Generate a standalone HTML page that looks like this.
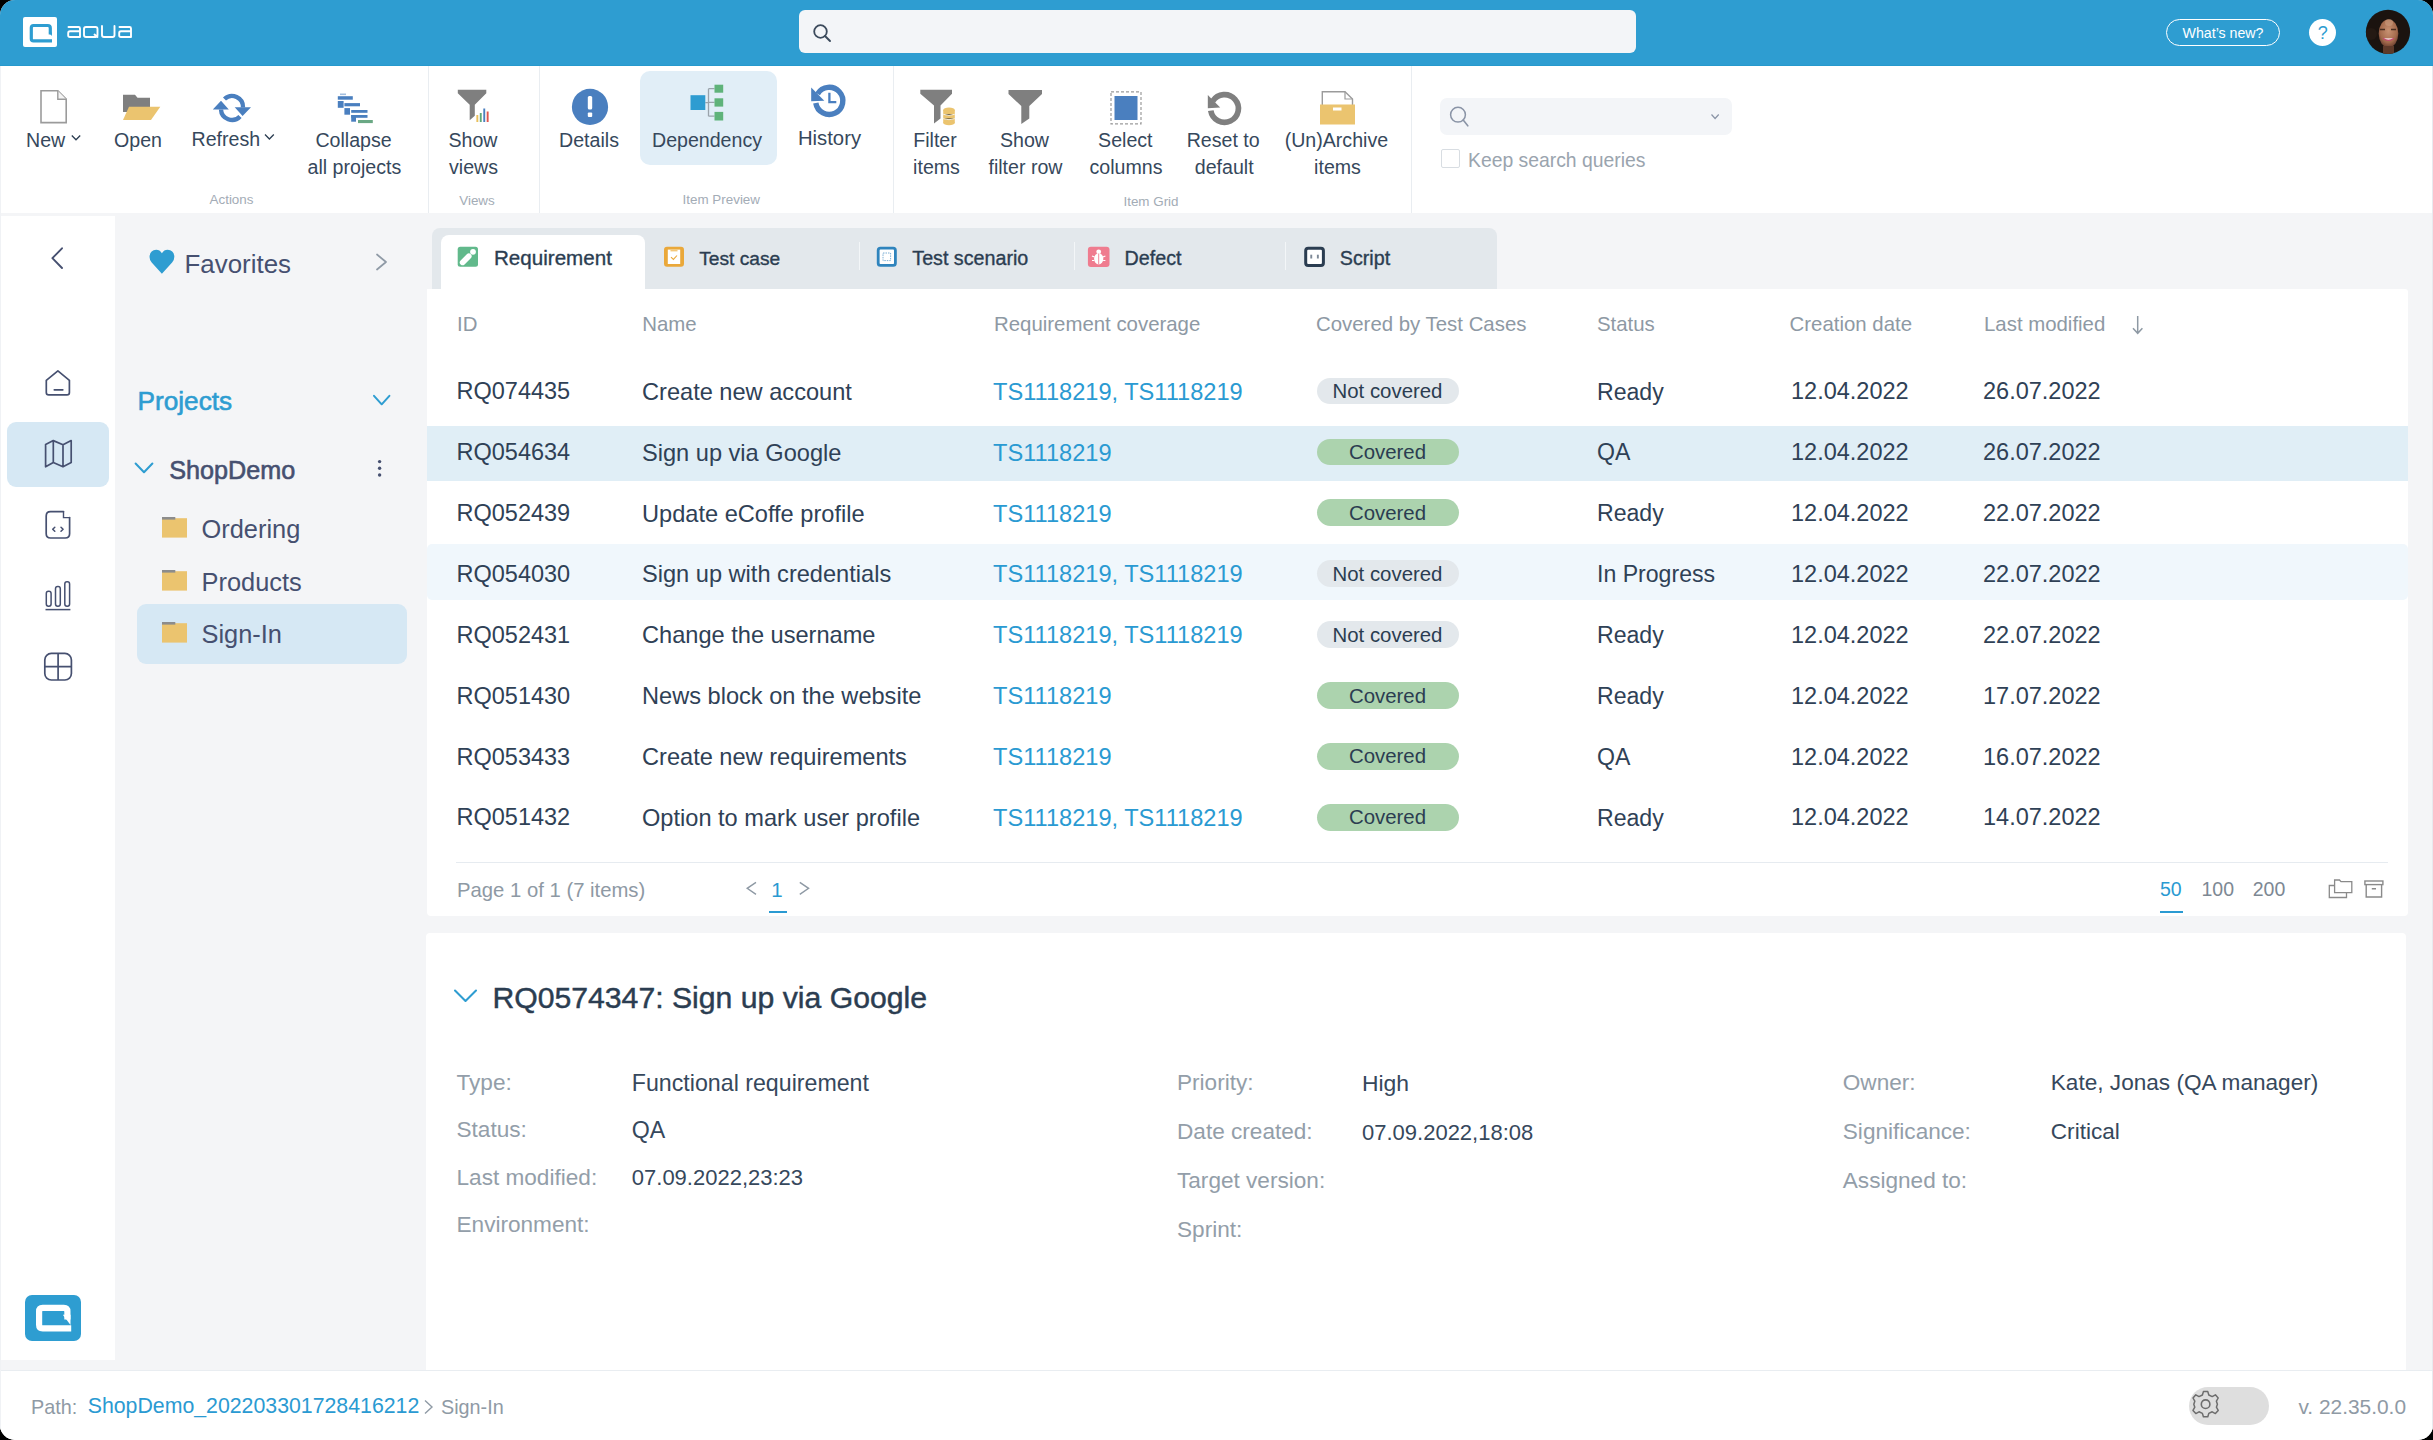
<!DOCTYPE html>
<html><head><meta charset="utf-8">
<style>
*{box-sizing:border-box;margin:0;padding:0}
html,body{width:2433px;height:1440px;overflow:hidden;background:#000}
body{font-family:"Liberation Sans",sans-serif;color:#2b3d51}
#app{position:absolute;left:0;top:0;width:2433px;height:1440px;border-radius:15px;overflow:hidden;background:#f4f5f7}
.a{position:absolute;white-space:nowrap}
svg.a{display:block}
</style></head><body>
<div id="app">
<div class="a" style="left:0px;top:0px;width:2433px;height:66px;background:#2e9dd1;"></div><div class="a" style="left:0px;top:64.6px;width:2433px;height:1.4px;background:#2699cd;"></div><div class="a" style="left:23px;top:17px;width:34px;height:30px;background:#fff;border-radius:2px"></div><svg class="a" style="left:23px;top:17px;overflow:visible" width="34" height="30" viewBox="23 17 34 30"><path d="M50.3 34.5 V28 Q50.3 25.5 47.8 25.5 H33.5 Q31.3 25.5 31.3 27.7 V38.7 Q31.3 40.9 33.5 40.9 H52" fill="none" stroke="#2e9dd1" stroke-width="3.2"/><path d="M48.7 32.5 L51.9 32.5 L51.9 36 Z" fill="#2e9dd1"/></svg><svg class="a" style="left:66px;top:24px;overflow:visible" width="68" height="16" viewBox="66 24 68 16"><g fill="none" stroke="#fff" stroke-width="1.9" stroke-linecap="round" stroke-linejoin="round">
<path d="M68.5 27 H78.5 Q80 27 80 28.5 V37 M80 31.3 H70 Q68.2 31.3 68.2 33 V35.5 Q68.2 37 70 37 H80"/>
<path d="M86 27 H95.5 Q97.5 27 97.5 29 V35 Q97.5 37 95.5 37 H86 Q84 37 84 35 V29 Q84 27 86 27 Z M94.5 34.5 L97.5 37"/>
<path d="M102 26 V35 Q102 37 104 37 H112.5 Q114.5 37 114.5 35 V26"/>
<path d="M119.5 27 H129.5 Q131 27 131 28.5 V37 M131 31.3 H121 Q119.2 31.3 119.2 33 V35.5 Q119.2 37 121 37 H131"/>
</g></svg><div class="a" style="left:799px;top:10px;width:837px;height:43px;background:#f3f5f8;border-radius:6px"></div><svg class="a" style="left:811px;top:22px;overflow:visible" width="22" height="22" viewBox="811 22 22 22"><circle cx="820.5" cy="31.5" r="6.3" fill="none" stroke="#3b4a5c" stroke-width="1.8"/><path d="M825 36 L830 41" stroke="#3b4a5c" stroke-width="1.9" stroke-linecap="round"/></svg><div class="a" style="left:2166px;top:19px;width:114px;height:27px;border:1.6px solid #fff;border-radius:14px"></div><div class="a" style="left:2166.00px;top:24.38px;width:114px;text-align:center;font-size:14.2px;line-height:18px;color:#fff;">What’s new?</div><div class="a" style="left:2309px;top:18.5px;width:27px;height:27px;background:#fff;border-radius:50%"></div><div class="a" style="left:2309.20px;top:22.26px;width:27px;text-align:center;font-size:18px;line-height:22px;color:#2e9dd1;">?</div><svg class="a" style="left:2364px;top:8px;overflow:visible" width="48" height="48" viewBox="2364 8 48 48"><defs><clipPath id="avc"><circle cx="2388" cy="31.9" r="22.1"/></clipPath><radialGradient id="fg" cx="0.5" cy="0.4" r="0.6"><stop offset="0" stop-color="#c89272"/><stop offset="0.7" stop-color="#a46a4c"/><stop offset="1" stop-color="#6b4030"/></radialGradient></defs><g clip-path="url(#avc)"><rect x="2364" y="8" width="48" height="48" fill="#1b130f"/><circle cx="2371" cy="34" r="6" fill="#241913"/><ellipse cx="2388.5" cy="33.5" rx="9.8" ry="14" fill="url(#fg)"/><rect x="2383" y="46" width="11" height="8" fill="#5e3a2a"/><path d="M2380 29.5 H2385 M2391 29.5 H2396" stroke="#4a2e20" stroke-width="1.3"/><path d="M2383 38.3 Q2388.5 42.5 2394 38.3" fill="#f2dede" stroke="#c04a6e" stroke-width="1.3"/><ellipse cx="2389" cy="22.5" rx="4" ry="3.5" fill="#cfa283" opacity=".5"/></g></svg><div class="a" style="left:0px;top:66px;width:2433px;height:147px;background:#fff;"></div><div class="a" style="left:428px;top:66px;width:1px;height:147px;background:#e9edf1;"></div><div class="a" style="left:539px;top:66px;width:1px;height:147px;background:#e9edf1;"></div><div class="a" style="left:893px;top:66px;width:1px;height:147px;background:#e9edf1;"></div><div class="a" style="left:1411px;top:66px;width:1px;height:147px;background:#e9edf1;"></div><div class="a" style="left:640px;top:71px;width:137px;height:94px;background:#e1eef7;border-radius:10px"></div><svg class="a" style="left:38px;top:88px;overflow:visible" width="32" height="38" viewBox="38 88 32 38"><path d="M41 90.8 H57.8 L66.2 99.2 V122.6 H41 Z" fill="#fff" stroke="#9b9b9b" stroke-width="1.6"/><path d="M57.8 90.8 V99.2 H66.2" fill="#f4f4f4" stroke="#9b9b9b" stroke-width="1.4"/></svg><div class="a" style="left:26px;top:127.71px;font-size:19.6px;line-height:24px;color:#36485c;">New</div><svg class="a" style="left:70px;top:133px;overflow:visible" width="14" height="10" viewBox="70 133 14 10"><path d="M71.8 135.5 L76 139.8 L80.2 135.5" fill="none" stroke="#2b3d51" stroke-width="1.3"/></svg><svg class="a" style="left:120px;top:92px;overflow:visible" width="44" height="32" viewBox="120 92 44 32"><path d="M123 94.8 H135 L137.5 97.8 H150 V112 H123 Z" fill="#7f7f7f"/><path d="M123 119.9 L129 106.8 H160.3 L151 119.9 Z" fill="#ebc46f"/></svg><div class="a" style="left:98.00px;top:127.71px;width:80px;text-align:center;font-size:19.6px;line-height:24px;color:#36485c;">Open</div><svg class="a" style="left:210px;top:90px;overflow:visible" width="44" height="36" viewBox="210 90 44 36"><g fill="none" stroke="#4a7fbf" stroke-width="4.4"><path d="M224.5 99 A11 11 0 0 1 243 107.5"/><path d="M240 116.5 A11 11 0 0 1 221 109.5"/></g><path d="M234.7 107.2 L251 107.2 L242.6 116 Z M212.8 109.6 L228.8 109.6 L221 100.8 Z" fill="#4a7fbf"/></svg><div class="a" style="left:191.5px;top:126.51px;font-size:19.6px;line-height:24px;color:#36485c;">Refresh</div><svg class="a" style="left:262px;top:132px;overflow:visible" width="14" height="10" viewBox="262 132 14 10"><path d="M265 134.5 L269.4 139 L273.8 134.5" fill="none" stroke="#2b3d51" stroke-width="1.3"/></svg><svg class="a" style="left:335px;top:90px;overflow:visible" width="42" height="36" viewBox="335 90 42 36"><g fill="#4a7fbf"><rect x="337.8" y="96.2" width="15" height="3.5"/><rect x="340" y="93.5" width="6" height="1.6" opacity=".5"/><rect x="337.8" y="101" width="5.8" height="6.8"/><rect x="344.4" y="103.1" width="15.6" height="3.2"/><rect x="344.4" y="108.1" width="5.6" height="6.6"/><rect x="351.2" y="110" width="16.3" height="2.8"/><rect x="351.2" y="115" width="16.3" height="2.8"/><rect x="351.2" y="115" width="4.8" height="6.7"/></g><rect x="358" y="120" width="14.8" height="3.1" fill="#6aa884"/></svg><div class="a" style="left:273.50px;top:128.21px;width:160px;text-align:center;font-size:19.6px;line-height:24px;color:#36485c;">Collapse</div><div class="a" style="left:274.40px;top:155.21px;width:160px;text-align:center;font-size:19.6px;line-height:24px;color:#36485c;">all projects</div><div class="a" style="left:151.50px;top:191.16px;width:160px;text-align:center;font-size:13.4px;line-height:17px;color:#a3acb6;">Actions</div><svg class="a" style="left:455px;top:88px;overflow:visible" width="36" height="36" viewBox="455 88 36 36"><path d="M457.8 89.8 H486.3 V93.2 L474.8 104.8 V115.8 L469.7 120.2 V104.8 L457.8 93.2 Z" fill="#7f7f7f"/><rect x="476.4" y="115" width="1.9" height="7" fill="#e9bf5c"/><rect x="479.8" y="113" width="1.9" height="9" fill="#5fa87a"/><rect x="483.3" y="108.5" width="1.9" height="13.5" fill="#4a7fbf"/><rect x="486.7" y="111.5" width="1.9" height="10.5" fill="#e0564e"/></svg><div class="a" style="left:393.00px;top:128.21px;width:160px;text-align:center;font-size:19.6px;line-height:24px;color:#36485c;">Show</div><div class="a" style="left:393.50px;top:155.21px;width:160px;text-align:center;font-size:19.6px;line-height:24px;color:#36485c;">views</div><div class="a" style="left:397.00px;top:192.46px;width:160px;text-align:center;font-size:13.4px;line-height:17px;color:#a3acb6;">Views</div><svg class="a" style="left:570px;top:87px;overflow:visible" width="40" height="40" viewBox="570 87 40 40"><circle cx="590" cy="106.9" r="18.1" fill="#4a7fbf"/><rect x="587.8" y="96" width="4.4" height="13.5" rx="1.5" fill="#fff"/><rect x="587.8" y="112.5" width="4.4" height="4.4" rx="1" fill="#fff"/></svg><div class="a" style="left:509.00px;top:128.21px;width:160px;text-align:center;font-size:19.6px;line-height:24px;color:#36485c;">Details</div><svg class="a" style="left:688px;top:82px;overflow:visible" width="40" height="42" viewBox="688 82 40 42"><g stroke="#9aa3ab" stroke-width="1.3" fill="none"><path d="M705.3 102.6 H708.5 M708.5 88.7 V116.2 M708.5 88.7 H714.5 M708.5 102.4 H714.5 M708.5 116.2 H714.5"/></g><rect x="690.5" y="95.2" width="14.8" height="14.8" fill="#2e9cd1"/><g fill="#5fb37a"><rect x="714.5" y="84.7" width="8.7" height="8"/><rect x="714.5" y="98.3" width="8.7" height="8.3"/><rect x="714.5" y="111.9" width="8.7" height="8.6"/></g></svg><div class="a" style="left:627.00px;top:128.21px;width:160px;text-align:center;font-size:19.6px;line-height:24px;color:#36485c;">Dependency</div><svg class="a" style="left:806px;top:80px;overflow:visible" width="44" height="42" viewBox="806 80 44 42"><path d="M815.8 103 A13.6 13.6 0 1 0 817.6 93.8" fill="none" stroke="#4a7fbf" stroke-width="5.4"/><path d="M811.2 87.6 L811.2 101.2 L824.3 100.8 Z" fill="#4a7fbf"/><path d="M829.4 92.8 V102.2 H836.3" fill="none" stroke="#4a7fbf" stroke-width="2.3"/></svg><div class="a" style="left:749.50px;top:125.77px;width:160px;text-align:center;font-size:20.3px;line-height:25px;color:#36485c;">History</div><div class="a" style="left:641.30px;top:191.16px;width:160px;text-align:center;font-size:13.4px;line-height:17px;color:#a3acb6;">Item Preview</div><svg class="a" style="left:917px;top:87px;overflow:visible" width="42" height="40" viewBox="917 87 42 40"><path d="M920.3 89.7 H952 V93.8 L940.5 105.5 V118.5 L934 123.4 V105.5 L920.3 93.8 Z" fill="#7f7f7f"/><g fill="#ebc46f"><ellipse cx="949" cy="110" rx="5.8" ry="2.4"/><rect x="943.2" y="110" width="11.6" height="13"/><ellipse cx="949" cy="123" rx="5.8" ry="2.2"/></g><g stroke="#fff" stroke-width="1" opacity=".8"><path d="M943.2 114.3 Q949 116.5 954.8 114.3 M943.2 118.6 Q949 120.8 954.8 118.6"/></g></svg><div class="a" style="left:855.00px;top:128.21px;width:160px;text-align:center;font-size:19.6px;line-height:24px;color:#36485c;">Filter</div><div class="a" style="left:856.50px;top:155.21px;width:160px;text-align:center;font-size:19.6px;line-height:24px;color:#36485c;">items</div><svg class="a" style="left:1005px;top:87px;overflow:visible" width="40" height="40" viewBox="1005 87 40 40"><path d="M1008.5 90 H1042 V94 L1029.3 106 V118.5 L1021.3 124 V106 L1008.5 94 Z" fill="#7f7f7f"/></svg><div class="a" style="left:944.50px;top:128.21px;width:160px;text-align:center;font-size:19.6px;line-height:24px;color:#36485c;">Show</div><div class="a" style="left:945.50px;top:155.21px;width:160px;text-align:center;font-size:19.6px;line-height:24px;color:#36485c;">filter row</div><svg class="a" style="left:1108px;top:89px;overflow:visible" width="36" height="38" viewBox="1108 89 36 38"><rect x="1111" y="91.9" width="30" height="32" fill="none" stroke="#9b9b9b" stroke-width="1.2" stroke-dasharray="3 2"/><rect x="1114.5" y="96" width="23" height="24" fill="#4a7fbf"/></svg><div class="a" style="left:1045.30px;top:128.21px;width:160px;text-align:center;font-size:19.6px;line-height:24px;color:#36485c;">Select</div><div class="a" style="left:1046.00px;top:155.21px;width:160px;text-align:center;font-size:19.6px;line-height:24px;color:#36485c;">columns</div><svg class="a" style="left:1204px;top:88px;overflow:visible" width="42" height="40" viewBox="1204 88 42 40"><path d="M1210.8 110.6 A13.9 13.9 0 1 0 1212.8 101" fill="none" stroke="#7f7f7f" stroke-width="5.7"/><path d="M1207.8 95 L1207.8 108.2 L1220.2 107.6 Z" fill="#7f7f7f"/></svg><div class="a" style="left:1143.20px;top:128.21px;width:160px;text-align:center;font-size:19.6px;line-height:24px;color:#36485c;">Reset to</div><div class="a" style="left:1144.20px;top:155.21px;width:160px;text-align:center;font-size:19.6px;line-height:24px;color:#36485c;">default</div><svg class="a" style="left:1318px;top:89px;overflow:visible" width="40" height="38" viewBox="1318 89 40 38"><path d="M1322.3 105 V91.8 H1345 L1352.5 99 V105" fill="#fff" stroke="#9b9b9b" stroke-width="1.4"/><path d="M1345 91.8 V99 H1352.5" fill="none" stroke="#9b9b9b" stroke-width="1.2"/><rect x="1320" y="104.5" width="35" height="20" fill="#ebc46f"/><rect x="1333" y="107.5" width="8.5" height="3" fill="#fff"/></svg><div class="a" style="left:1256.40px;top:128.21px;width:160px;text-align:center;font-size:19.6px;line-height:24px;color:#36485c;">(Un)Archive</div><div class="a" style="left:1257.50px;top:155.21px;width:160px;text-align:center;font-size:19.6px;line-height:24px;color:#36485c;">items</div><div class="a" style="left:1071.00px;top:192.56px;width:160px;text-align:center;font-size:13.4px;line-height:17px;color:#a3acb6;">Item Grid</div><div class="a" style="left:1440px;top:98px;width:292px;height:37px;background:#f3f5f8;border-radius:7px"></div><svg class="a" style="left:1446px;top:103px;overflow:visible" width="26" height="26" viewBox="1446 103 26 26"><circle cx="1458" cy="114.7" r="7.4" fill="none" stroke="#8a94a6" stroke-width="1.5"/><path d="M1463.2 120 L1467.8 125.8" stroke="#8a94a6" stroke-width="1.6" stroke-linecap="round"/></svg><svg class="a" style="left:1708px;top:111px;overflow:visible" width="14" height="12" viewBox="1708 111 14 12"><path d="M1711.5 114.5 L1715.1 118.5 L1718.7 114.5" fill="none" stroke="#8a94a6" stroke-width="1.2"/></svg><div class="a" style="left:1440.5px;top:149.2px;width:19px;height:19px;border:1.2px solid #d8dde2;border-radius:2px;background:#fff"></div><div class="a" style="left:1468px;top:148.30px;font-size:19.35px;line-height:24px;color:#9aa4ae;">Keep search queries</div><div class="a" style="left:0px;top:216px;width:114.8px;height:1144px;background:#fff;"></div><div class="a" style="left:7px;top:422px;width:102px;height:64.5px;background:#d6e8f4;border-radius:9px"></div><svg class="a" style="left:40px;top:240px;overflow:visible" width="30" height="36" viewBox="40 240 30 36"><path d="M62 248.3 L52.4 258.2 L62 268" fill="none" stroke="#465070" stroke-width="1.9" stroke-linecap="round" stroke-linejoin="round"/></svg><svg class="a" style="left:40px;top:365px;overflow:visible" width="36" height="36" viewBox="40 365 36 36"><path d="M46.3 380.3 L57.9 370.8 L69.4 380.3 V392.4 Q69.4 394.8 67 394.8 H48.7 Q46.3 394.8 46.3 392.4 Z" fill="none" stroke="#465070" stroke-width="1.7" stroke-linejoin="round"/><path d="M54.3 389.8 H62.8" stroke="#465070" stroke-width="1.7" stroke-linecap="round"/></svg><svg class="a" style="left:40px;top:435px;overflow:visible" width="36" height="36" viewBox="40 435 36 36"><path d="M45.6 444.5 L53.3 440.6 L63 444.8 L71.2 440.6 V462.6 L63 466.8 L53.3 462.4 L45.6 466.8 Z M53.3 440.6 V462.4 M63 444.8 V466.8" fill="none" stroke="#465070" stroke-width="1.7" stroke-linejoin="round"/></svg><svg class="a" style="left:40px;top:505px;overflow:visible" width="36" height="40" viewBox="40 505 36 40"><path d="M63.5 511.6 H50.5 Q46.2 511.6 46.2 515.9 V533.7 Q46.2 538 50.5 538 H65.2 Q69.6 538 69.6 533.7 V517.6" fill="none" stroke="#465070" stroke-width="1.7" stroke-linecap="round"/><path d="M63.5 511.6 V517.6 H69.6" fill="none" stroke="#465070" stroke-width="1.4" stroke-linecap="round"/><path d="M54.8 527.2 L52.7 529.2 L54.8 531.2 M61 527.2 L63.1 529.2 L61 531.2" fill="none" stroke="#465070" stroke-width="1.5" stroke-linecap="round" stroke-linejoin="round"/></svg><svg class="a" style="left:40px;top:575px;overflow:visible" width="36" height="40" viewBox="40 575 36 40"><g fill="none" stroke="#465070" stroke-width="1.5"><rect x="46.3" y="591.2" width="4.8" height="15" rx="2.2"/><rect x="55.5" y="586.6" width="4.8" height="19.6" rx="2.2"/><rect x="64.8" y="581.8" width="4.8" height="24.4" rx="2.2"/><path d="M45.5 609.6 H70.4"/></g></svg><svg class="a" style="left:40px;top:648px;overflow:visible" width="36" height="36" viewBox="40 648 36 36"><rect x="44.8" y="653.4" width="26.6" height="26.6" rx="6.5" fill="none" stroke="#465070" stroke-width="1.7"/><path d="M58.1 653.4 V680 M44.8 666.7 H71.4" stroke="#465070" stroke-width="1.7"/></svg><div class="a" style="left:25px;top:1294.5px;width:56px;height:46px;background:#2e9dd1;border-radius:7px"></div><svg class="a" style="left:30px;top:1298px;overflow:visible" width="46" height="38" viewBox="30 1298 46 38"><path d="M67.4 1319.5 V1311.5 Q67.4 1307.9 63.8 1307.9 H42.7 Q39.1 1307.9 39.1 1311.5 V1324.8 Q39.1 1328.4 42.7 1328.4 H71.2" fill="none" stroke="#fff" stroke-width="6.2"/><path d="M62.8 1314.8 L70.5 1314.8 L70.5 1325 Z" fill="#fff"/><path d="M64.3 1311 L64.3 1319.5 L70.5 1324" fill="none" stroke="#2e9dd1" stroke-width="0"/></svg><svg class="a" style="left:146px;top:246px;overflow:visible" width="32" height="32" viewBox="146 246 32 32"><path d="M161.9 273.8 L151.7 262.6 Q149.2 259.6 149.6 256 Q150.4 250 156.2 249.8 Q159.8 249.8 161.9 253.2 Q164 249.8 167.6 249.8 Q173.5 250 174.3 256 Q174.6 259.6 172.1 262.6 Z" fill="#2e9dd1"/></svg><div class="a" style="left:184.5px;top:248.23px;font-size:25.9px;line-height:32px;color:#465070;">Favorites</div><svg class="a" style="left:372px;top:250px;overflow:visible" width="18" height="24" viewBox="372 250 18 24"><path d="M377 254.5 L386 262 L377 269.5" fill="none" stroke="#8f9aa6" stroke-width="1.7" stroke-linecap="round" stroke-linejoin="round"/></svg><div class="a" style="left:137.5px;top:385.12px;font-size:26.2px;line-height:33px;color:#2e9dd1;-webkit-text-stroke:0.6px currentColor">Projects</div><svg class="a" style="left:370px;top:390px;overflow:visible" width="24" height="20" viewBox="370 390 24 20"><path d="M374 395.8 L381.7 404.3 L389.4 395.8" fill="none" stroke="#2e9dd1" stroke-width="2" stroke-linecap="round" stroke-linejoin="round"/></svg><svg class="a" style="left:132px;top:458px;overflow:visible" width="24" height="20" viewBox="132 458 24 20"><path d="M135.6 463.5 L144 472.3 L152.4 463.5" fill="none" stroke="#2e9dd1" stroke-width="2" stroke-linecap="round" stroke-linejoin="round"/></svg><div class="a" style="left:169.3px;top:453.77px;font-size:25.2px;line-height:32px;color:#465070;-webkit-text-stroke:0.6px currentColor">ShopDemo</div><svg class="a" style="left:374px;top:455px;overflow:visible" width="12" height="26" viewBox="374 455 12 26"><g fill="#465070"><circle cx="379.6" cy="461.6" r="1.7"/><circle cx="379.6" cy="468.3" r="1.7"/><circle cx="379.6" cy="475" r="1.7"/></g></svg><div class="a" style="left:136.6px;top:603.7px;width:270px;height:60.2px;background:#d6e8f4;border-radius:9px"></div><svg class="a" style="left:160px;top:515.3px;overflow:visible" width="30" height="26" viewBox="160 515.3 30 26"><rect x="162" y="518.5" width="25" height="19.4" fill="#ebc46f"/><rect x="162" y="517.3" width="13.3" height="2.6" fill="#8c8c8c"/></svg><div class="a" style="left:201.5px;top:513.30px;font-size:25.4px;line-height:32px;color:#465070;">Ordering</div><svg class="a" style="left:160px;top:567.7px;overflow:visible" width="30" height="26" viewBox="160 567.7 30 26"><rect x="162" y="570.9000000000001" width="25" height="19.4" fill="#ebc46f"/><rect x="162" y="569.7" width="13.3" height="2.6" fill="#8c8c8c"/></svg><div class="a" style="left:201.5px;top:565.80px;font-size:25.4px;line-height:32px;color:#465070;">Products</div><svg class="a" style="left:160px;top:620.2px;overflow:visible" width="30" height="26" viewBox="160 620.2 30 26"><rect x="162" y="623.4000000000001" width="25" height="19.4" fill="#ebc46f"/><rect x="162" y="622.2" width="13.3" height="2.6" fill="#8c8c8c"/></svg><div class="a" style="left:201.5px;top:617.60px;font-size:25.4px;line-height:32px;color:#465070;">Sign-In</div><div class="a" style="left:432px;top:228px;width:1065px;height:61px;background:#e3e8ec;border-radius:8px 8px 0 0"></div><div class="a" style="left:441px;top:235px;width:204px;height:60px;background:#fff;border-radius:8px 8px 0 0"></div><div class="a" style="left:859px;top:241.6px;width:1.4px;height:28px;background:#f3f6f8;"></div><div class="a" style="left:1073.8px;top:241.6px;width:1.4px;height:28px;background:#f3f6f8;"></div><div class="a" style="left:1285px;top:241.6px;width:1.4px;height:28px;background:#f3f6f8;"></div><svg class="a" style="left:455px;top:244px;overflow:visible" width="26" height="26" viewBox="455 244 26 26"><rect x="457.7" y="246.7" width="20.3" height="20" rx="2.5" fill="#61b98b"/><path d="M462.6 262.4 L468.8 256.2" stroke="#fff" stroke-width="5.6" stroke-linecap="round"/><circle cx="473" cy="251.8" r="2.9" fill="#fff"/></svg><div class="a" style="left:494px;top:245.06px;font-size:20.6px;line-height:26px;color:#2b3d51;-webkit-text-stroke:0.35px currentColor">Requirement</div><svg class="a" style="left:661px;top:244px;overflow:visible" width="26" height="26" viewBox="661 244 26 26"><rect x="664" y="246.8" width="20" height="20" rx="3" fill="#eaa83a"/><rect x="667.8" y="249.6" width="12.4" height="14.4" fill="#fff"/><path d="M671 257.2 L673.4 259.4 L677 255.5" fill="none" stroke="#eaa83a" stroke-width="1.1"/><rect x="670.5" y="249.6" width="7" height="1.8" fill="#f3c77a"/></svg><div class="a" style="left:699.2px;top:246.65px;font-size:19.2px;line-height:24px;color:#2b3d51;-webkit-text-stroke:0.35px currentColor">Test case</div><svg class="a" style="left:874px;top:244px;overflow:visible" width="26" height="26" viewBox="874 244 26 26"><rect x="878.2" y="248.2" width="17.2" height="17.2" rx="2.2" fill="#fff" stroke="#2f84bd" stroke-width="2.8"/><rect x="883" y="253" width="7.6" height="7.6" fill="none" stroke="#6ea6cf" stroke-width="0.9" stroke-dasharray="1.5 1"/></svg><div class="a" style="left:912.3px;top:245.97px;font-size:19.7px;line-height:25px;color:#2b3d51;-webkit-text-stroke:0.35px currentColor">Test scenario</div><svg class="a" style="left:1085px;top:244px;overflow:visible" width="28" height="26" viewBox="1085 244 28 26"><rect x="1087.9" y="246.7" width="21.6" height="20.3" rx="3" fill="#ef7c8f"/><ellipse cx="1098.7" cy="258.8" rx="4.6" ry="5.6" fill="#fff"/><circle cx="1098.7" cy="251.8" r="2.4" fill="#fff"/><path d="M1098.7 253.5 V264.5" stroke="#ef7c8f" stroke-width="0.9"/><path d="M1092 256 L1094.5 257 M1092 260.5 L1094.3 260.5 M1105.4 256 L1102.9 257 M1105.4 260.5 L1103.1 260.5" stroke="#fff" stroke-width="1.2"/></svg><div class="a" style="left:1124.6px;top:245.77px;font-size:19.7px;line-height:25px;color:#2b3d51;-webkit-text-stroke:0.35px currentColor">Defect</div><svg class="a" style="left:1301px;top:244px;overflow:visible" width="28" height="26" viewBox="1301 244 28 26"><rect x="1305.7" y="248.2" width="17.7" height="17.3" rx="2.5" fill="#fff" stroke="#2b3d51" stroke-width="3"/><rect x="1310.3" y="254.7" width="1.9" height="3.8" fill="#7d8896"/><rect x="1316.9" y="254.7" width="1.9" height="3.8" fill="#7d8896"/></svg><div class="a" style="left:1339.8px;top:245.77px;font-size:19.7px;line-height:25px;color:#2b3d51;-webkit-text-stroke:0.35px currentColor">Script</div><div class="a" style="left:427px;top:289px;width:1981px;height:627px;background:#fff;border-radius:0 3px 4px 4px"></div><div class="a" style="left:2408px;top:213px;width:25px;height:1157px;background:#f4f5f7;"></div><div class="a" style="left:457px;top:310.93px;font-size:20.4px;line-height:26px;color:#8e99a4;">ID</div><div class="a" style="left:642.2px;top:310.93px;font-size:20.4px;line-height:26px;color:#8e99a4;">Name</div><div class="a" style="left:994px;top:310.93px;font-size:20.4px;line-height:26px;color:#8e99a4;">Requirement coverage</div><div class="a" style="left:1316px;top:310.93px;font-size:20.4px;line-height:26px;color:#8e99a4;">Covered by Test Cases</div><div class="a" style="left:1597px;top:310.93px;font-size:20.4px;line-height:26px;color:#8e99a4;">Status</div><div class="a" style="left:1789.6px;top:310.93px;font-size:20.4px;line-height:26px;color:#8e99a4;">Creation date</div><div class="a" style="left:1984px;top:310.93px;font-size:20.4px;line-height:26px;color:#8e99a4;">Last modified</div><svg class="a" style="left:2128px;top:312px;overflow:visible" width="20" height="24" viewBox="2128 312 20 24"><path d="M2137.7 316 V333 M2133 328.3 L2137.7 333.3 L2142.4 328.3" fill="none" stroke="#8e99a4" stroke-width="1.5"/></svg><div class="a" style="left:427px;top:426px;width:1981px;height:55.4px;background:#e0eef6;"></div><div class="a" style="left:427px;top:544.2px;width:1981px;height:55.5px;background:#f0f7fc;border-radius:5px"></div><div class="a" style="left:456.5px;top:377.36px;font-size:23.5px;line-height:29px;color:#2f4156;">RQ074435</div><div class="a" style="left:642px;top:376.82px;font-size:23.6px;line-height:30px;color:#2f4156;">Create new account</div><div class="a" style="left:993px;top:376.82px;font-size:23.6px;line-height:30px;color:#2a9ad2;">TS1118219, TS1118219</div><div class="a" style="left:1316.5px;top:377.7px;width:142px;height:26.8px;background:#e3e8ec;border-radius:14px"></div><div class="a" style="left:1316.50px;top:378.23px;width:142px;text-align:center;font-size:20.4px;line-height:26px;color:#2b3d51;">Not covered</div><div class="a" style="left:1597px;top:377.50px;font-size:23.1px;line-height:29px;color:#2f4156;">Ready</div><div class="a" style="left:1791px;top:377.36px;font-size:23.5px;line-height:29px;color:#2f4156;">12.04.2022</div><div class="a" style="left:1983px;top:377.36px;font-size:23.5px;line-height:29px;color:#2f4156;">26.07.2022</div><div class="a" style="left:456.5px;top:438.22px;font-size:23.5px;line-height:29px;color:#2f4156;">RQ054634</div><div class="a" style="left:642px;top:437.68px;font-size:23.6px;line-height:30px;color:#2f4156;">Sign up via Google</div><div class="a" style="left:993px;top:437.68px;font-size:23.6px;line-height:30px;color:#2a9ad2;">TS1118219</div><div class="a" style="left:1316.5px;top:438.56px;width:142px;height:26.8px;background:#acd3ae;border-radius:14px"></div><div class="a" style="left:1316.50px;top:439.09px;width:142px;text-align:center;font-size:20.4px;line-height:26px;color:#2b3d51;">Covered</div><div class="a" style="left:1597px;top:438.36px;font-size:23.1px;line-height:29px;color:#2f4156;">QA</div><div class="a" style="left:1791px;top:438.22px;font-size:23.5px;line-height:29px;color:#2f4156;">12.04.2022</div><div class="a" style="left:1983px;top:438.22px;font-size:23.5px;line-height:29px;color:#2f4156;">26.07.2022</div><div class="a" style="left:456.5px;top:499.08px;font-size:23.5px;line-height:29px;color:#2f4156;">RQ052439</div><div class="a" style="left:642px;top:498.54px;font-size:23.6px;line-height:30px;color:#2f4156;">Update eCoffe profile</div><div class="a" style="left:993px;top:498.54px;font-size:23.6px;line-height:30px;color:#2a9ad2;">TS1118219</div><div class="a" style="left:1316.5px;top:499.42px;width:142px;height:26.8px;background:#acd3ae;border-radius:14px"></div><div class="a" style="left:1316.50px;top:499.95px;width:142px;text-align:center;font-size:20.4px;line-height:26px;color:#2b3d51;">Covered</div><div class="a" style="left:1597px;top:499.22px;font-size:23.1px;line-height:29px;color:#2f4156;">Ready</div><div class="a" style="left:1791px;top:499.08px;font-size:23.5px;line-height:29px;color:#2f4156;">12.04.2022</div><div class="a" style="left:1983px;top:499.08px;font-size:23.5px;line-height:29px;color:#2f4156;">22.07.2022</div><div class="a" style="left:456.5px;top:559.94px;font-size:23.5px;line-height:29px;color:#2f4156;">RQ054030</div><div class="a" style="left:642px;top:559.40px;font-size:23.6px;line-height:30px;color:#2f4156;">Sign up with credentials</div><div class="a" style="left:993px;top:559.40px;font-size:23.6px;line-height:30px;color:#2a9ad2;">TS1118219, TS1118219</div><div class="a" style="left:1316.5px;top:560.28px;width:142px;height:26.8px;background:#e3e8ec;border-radius:14px"></div><div class="a" style="left:1316.50px;top:560.81px;width:142px;text-align:center;font-size:20.4px;line-height:26px;color:#2b3d51;">Not covered</div><div class="a" style="left:1597px;top:560.08px;font-size:23.1px;line-height:29px;color:#2f4156;">In Progress</div><div class="a" style="left:1791px;top:559.94px;font-size:23.5px;line-height:29px;color:#2f4156;">12.04.2022</div><div class="a" style="left:1983px;top:559.94px;font-size:23.5px;line-height:29px;color:#2f4156;">22.07.2022</div><div class="a" style="left:456.5px;top:620.80px;font-size:23.5px;line-height:29px;color:#2f4156;">RQ052431</div><div class="a" style="left:642px;top:620.26px;font-size:23.6px;line-height:30px;color:#2f4156;">Change the username</div><div class="a" style="left:993px;top:620.26px;font-size:23.6px;line-height:30px;color:#2a9ad2;">TS1118219, TS1118219</div><div class="a" style="left:1316.5px;top:621.1400000000001px;width:142px;height:26.8px;background:#e3e8ec;border-radius:14px"></div><div class="a" style="left:1316.50px;top:621.67px;width:142px;text-align:center;font-size:20.4px;line-height:26px;color:#2b3d51;">Not covered</div><div class="a" style="left:1597px;top:620.94px;font-size:23.1px;line-height:29px;color:#2f4156;">Ready</div><div class="a" style="left:1791px;top:620.80px;font-size:23.5px;line-height:29px;color:#2f4156;">12.04.2022</div><div class="a" style="left:1983px;top:620.80px;font-size:23.5px;line-height:29px;color:#2f4156;">22.07.2022</div><div class="a" style="left:456.5px;top:681.66px;font-size:23.5px;line-height:29px;color:#2f4156;">RQ051430</div><div class="a" style="left:642px;top:681.12px;font-size:23.6px;line-height:30px;color:#2f4156;">News block on the website</div><div class="a" style="left:993px;top:681.12px;font-size:23.6px;line-height:30px;color:#2a9ad2;">TS1118219</div><div class="a" style="left:1316.5px;top:682.0px;width:142px;height:26.8px;background:#acd3ae;border-radius:14px"></div><div class="a" style="left:1316.50px;top:682.53px;width:142px;text-align:center;font-size:20.4px;line-height:26px;color:#2b3d51;">Covered</div><div class="a" style="left:1597px;top:681.80px;font-size:23.1px;line-height:29px;color:#2f4156;">Ready</div><div class="a" style="left:1791px;top:681.66px;font-size:23.5px;line-height:29px;color:#2f4156;">12.04.2022</div><div class="a" style="left:1983px;top:681.66px;font-size:23.5px;line-height:29px;color:#2f4156;">17.07.2022</div><div class="a" style="left:456.5px;top:742.52px;font-size:23.5px;line-height:29px;color:#2f4156;">RQ053433</div><div class="a" style="left:642px;top:741.98px;font-size:23.6px;line-height:30px;color:#2f4156;">Create new requirements</div><div class="a" style="left:993px;top:741.98px;font-size:23.6px;line-height:30px;color:#2a9ad2;">TS1118219</div><div class="a" style="left:1316.5px;top:742.86px;width:142px;height:26.8px;background:#acd3ae;border-radius:14px"></div><div class="a" style="left:1316.50px;top:743.39px;width:142px;text-align:center;font-size:20.4px;line-height:26px;color:#2b3d51;">Covered</div><div class="a" style="left:1597px;top:742.66px;font-size:23.1px;line-height:29px;color:#2f4156;">QA</div><div class="a" style="left:1791px;top:742.52px;font-size:23.5px;line-height:29px;color:#2f4156;">12.04.2022</div><div class="a" style="left:1983px;top:742.52px;font-size:23.5px;line-height:29px;color:#2f4156;">16.07.2022</div><div class="a" style="left:456.5px;top:803.38px;font-size:23.5px;line-height:29px;color:#2f4156;">RQ051432</div><div class="a" style="left:642px;top:802.84px;font-size:23.6px;line-height:30px;color:#2f4156;">Option to mark user profile</div><div class="a" style="left:993px;top:802.84px;font-size:23.6px;line-height:30px;color:#2a9ad2;">TS1118219, TS1118219</div><div class="a" style="left:1316.5px;top:803.72px;width:142px;height:26.8px;background:#acd3ae;border-radius:14px"></div><div class="a" style="left:1316.50px;top:804.25px;width:142px;text-align:center;font-size:20.4px;line-height:26px;color:#2b3d51;">Covered</div><div class="a" style="left:1597px;top:803.52px;font-size:23.1px;line-height:29px;color:#2f4156;">Ready</div><div class="a" style="left:1791px;top:803.38px;font-size:23.5px;line-height:29px;color:#2f4156;">12.04.2022</div><div class="a" style="left:1983px;top:803.38px;font-size:23.5px;line-height:29px;color:#2f4156;">14.07.2022</div><div class="a" style="left:456px;top:862px;width:1932px;height:1.3px;background:#e6ebf0;"></div><div class="a" style="left:457px;top:878.17px;font-size:20.3px;line-height:25px;color:#8e99a4;">Page 1 of 1 (7 items)</div><svg class="a" style="left:742px;top:878px;overflow:visible" width="72" height="22" viewBox="742 878 72 22"><path d="M756 882.3 L747.2 888.3 L756 894.3 M799.8 882.3 L808.6 888.3 L799.8 894.3" fill="none" stroke="#8e99a4" stroke-width="1.4"/></svg><div class="a" style="left:762.00px;top:876.90px;width:30px;text-align:center;font-size:20.5px;line-height:26px;color:#2a9ad2;">1</div><div class="a" style="left:768.8px;top:910.8px;width:18.2px;height:2px;background:#2a9ad2;"></div><div class="a" style="left:2150.80px;top:877.34px;width:40px;text-align:center;font-size:19.5px;line-height:24px;color:#2a9ad2;">50</div><div class="a" style="left:2159.5px;top:910.9px;width:23.6px;height:1.8px;background:#2a9ad2;"></div><div class="a" style="left:2192.80px;top:877.34px;width:50px;text-align:center;font-size:19.5px;line-height:24px;color:#7d8893;">100</div><div class="a" style="left:2244.00px;top:877.34px;width:50px;text-align:center;font-size:19.5px;line-height:24px;color:#7d8893;">200</div><svg class="a" style="left:2325px;top:875px;overflow:visible" width="64" height="28" viewBox="2325 875 64 28"><g fill="#fff" stroke="#8a8a8a" stroke-width="1.3"><path d="M2329.3 885.5 H2334 L2335.5 887 H2346.5 V897.5 H2329.3 Z"/><path d="M2334.6 880 H2339.5 L2341 881.7 H2351.8 V892.6 H2334.6 Z"/></g><g fill="none" stroke="#8a8a8a" stroke-width="1.4"><rect x="2364.9" y="881" width="18" height="3.6"/><path d="M2366.2 884.6 V897 H2381.6 V884.6 M2371.8 888.8 H2376"/></g></svg><div class="a" style="left:426px;top:933px;width:1980px;height:437px;background:#fff;border-radius:4px 4px 0 0"></div><svg class="a" style="left:450px;top:984px;overflow:visible" width="32" height="22" viewBox="450 984 32 22"><path d="M455 990.5 L465.5 1001 L476 990.5" fill="none" stroke="#2e9dd1" stroke-width="2.1" stroke-linecap="round" stroke-linejoin="round"/></svg><div class="a" style="left:492.4px;top:978.54px;font-size:30.2px;line-height:38px;color:#2b3d51;-webkit-text-stroke:0.45px currentColor">RQ0574347: Sign up via Google</div><div class="a" style="left:456.5px;top:1069.37px;font-size:22.6px;line-height:28px;color:#939ea9;">Type:</div><div class="a" style="left:631.8px;top:1068.66px;font-size:23.2px;line-height:29px;color:#36485c;">Functional requirement</div><div class="a" style="left:456.5px;top:1116.27px;font-size:22.6px;line-height:28px;color:#939ea9;">Status:</div><div class="a" style="left:631.8px;top:1115.56px;font-size:23.2px;line-height:29px;color:#36485c;">QA</div><div class="a" style="left:456.5px;top:1163.97px;font-size:22.6px;line-height:28px;color:#939ea9;">Last modified:</div><div class="a" style="left:631.8px;top:1164.18px;font-size:22.0px;line-height:28px;color:#36485c;">07.09.2022,23:23</div><div class="a" style="left:456.5px;top:1210.77px;font-size:22.6px;line-height:28px;color:#939ea9;">Environment:</div><div class="a" style="left:1177px;top:1069.47px;font-size:22.6px;line-height:28px;color:#939ea9;">Priority:</div><div class="a" style="left:1362px;top:1068.87px;font-size:22.9px;line-height:29px;color:#36485c;">High</div><div class="a" style="left:1177px;top:1118.37px;font-size:22.6px;line-height:28px;color:#939ea9;">Date created:</div><div class="a" style="left:1362px;top:1118.58px;font-size:22.0px;line-height:28px;color:#36485c;">07.09.2022,18:08</div><div class="a" style="left:1177px;top:1167.27px;font-size:22.6px;line-height:28px;color:#939ea9;">Target version:</div><div class="a" style="left:1177px;top:1216.17px;font-size:22.6px;line-height:28px;color:#939ea9;">Sprint:</div><div class="a" style="left:1842.8px;top:1069.37px;font-size:22.6px;line-height:28px;color:#939ea9;">Owner:</div><div class="a" style="left:2050.8px;top:1069.37px;font-size:22.6px;line-height:28px;color:#36485c;">Kate, Jonas (QA manager)</div><div class="a" style="left:1842.8px;top:1117.67px;font-size:22.6px;line-height:28px;color:#939ea9;">Significance:</div><div class="a" style="left:2050.8px;top:1117.67px;font-size:22.6px;line-height:28px;color:#36485c;">Critical</div><div class="a" style="left:1842.8px;top:1166.97px;font-size:22.6px;line-height:28px;color:#939ea9;">Assigned to:</div><div class="a" style="left:0px;top:1370px;width:2433px;height:70px;background:#fff;"></div><div class="a" style="left:0px;top:1369.5px;width:2433px;height:1.2px;background:#e9edf1;"></div><div class="a" style="left:31px;top:1394.94px;font-size:19.8px;line-height:25px;color:#8f9aa5;">Path:</div><div class="a" style="left:87.7px;top:1393.42px;font-size:21.3px;line-height:27px;color:#2a9ad2;">ShopDemo_202203301728416212</div><svg class="a" style="left:420px;top:1396px;overflow:visible" width="18" height="22" viewBox="420 1396 18 22"><path d="M425 1400.5 L432 1407 L425 1413.5" fill="none" stroke="#8f9aa5" stroke-width="1.4"/></svg><div class="a" style="left:441px;top:1394.94px;font-size:19.8px;line-height:25px;color:#8f9aa5;">Sign-In</div><div class="a" style="left:2188.7px;top:1387.2px;width:80.4px;height:38px;background:#dedede;border-radius:19px"></div><svg class="a" style="left:2188px;top:1388px;overflow:visible" width="34" height="34" viewBox="2188 1388 34 34"><g transform="translate(2205.6 1404.2)"><path d="M-2.2 -12.6 H2.2 L3.2 -9.2 L6.6 -7.6 L9.8 -9.4 L12.6 -6.2 L10.8 -3 L11.8 0 L10.8 3 L12.6 6.2 L9.8 9.4 L6.6 7.6 L3.2 9.2 L2.2 12.6 H-2.2 L-3.2 9.2 L-6.6 7.6 L-9.8 9.4 L-12.6 6.2 L-10.8 3 L-11.8 0 L-10.8 -3 L-12.6 -6.2 L-9.8 -9.4 L-6.6 -7.6 L-3.2 -9.2 Z" fill="none" stroke="#6d6d6d" stroke-width="1.5" stroke-linejoin="round"/><circle r="4.3" fill="none" stroke="#6d6d6d" stroke-width="1.6"/></g></svg><div class="a" style="left:2298.4px;top:1394.06px;font-size:20.9px;line-height:26px;color:#8f9aa5;">v. 22.35.0.0</div><div class="a" style="left:0px;top:66px;width:1px;height:1374px;background:#f0f2f5;"></div><div class="a" style="left:2432px;top:66px;width:1px;height:1374px;background:#e8e9ee;"></div>
</div></body></html>
